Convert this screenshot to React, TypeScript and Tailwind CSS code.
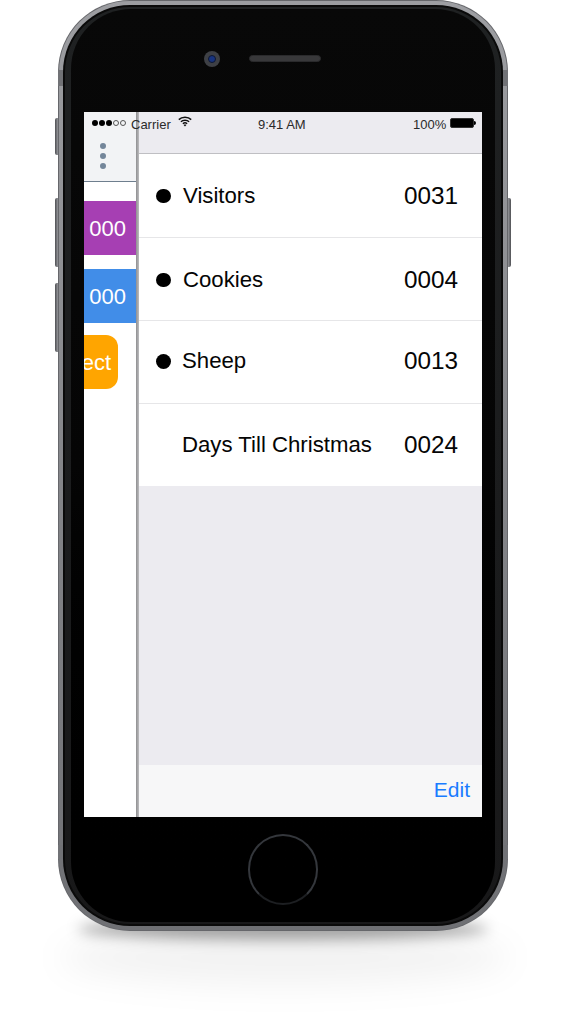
import React from "react";

function Row({ label, value, dot, h, pad, dotMl, labelMl, border }: { label: string; value: string; dot: boolean; h: string; pad: string; dotMl: string; labelMl: string; border: boolean }) {
  return (
    <div className={`flex items-center bg-white shrink-0 ${h} ${pad} ${border ? "border-b border-[#e6e6e8]" : ""}`}>
      <div className={`w-[17px] ${dotMl} flex justify-start`}>
        {dot && <div className="w-[14.5px] h-[14.5px] rounded-full bg-black" />}
      </div>
      <span className={`${labelMl} text-[22.2px] leading-none text-[#050505] flex-1`}>{label}</span>
      <span className="text-[24.3px] leading-none text-[#050505] mr-[24px]">{value}</span>
    </div>
  );
}

function SideButton({ h, mt }: { h: string; mt: string }) {
  return <div className={`w-[3px] rounded-l-[2px] bg-gradient-to-r from-[#4e4f53] to-[#97989c] ${h} ${mt}`} />;
}

function Band({ pos }: { pos: string }) {
  return <div className={`absolute w-[450px] left-0 ${pos} flex justify-between`}>
    <div className="w-[5px] h-full bg-[#717276]" />
    <div className="w-[5px] h-full bg-[#717276]" />
  </div>;
}

export default function App() {
  return (
    <div className="w-[585px] h-[1024px] bg-white overflow-hidden relative" style={{ fontFamily: '"Liberation Sans", Arial, sans-serif' }}>
      {/* ground shadow */}
      <div className="absolute left-[78px] top-[918px] w-[410px] h-[22px] rounded-[50%] bg-[#00000059] blur-[7px]" />
      <div className="absolute left-[60px] top-[930px] w-[450px] h-[55px] rounded-[50%] bg-[#0000000d] blur-[16px]" />

      {/* side buttons */}
      <div className="absolute left-[55px] top-[118px] flex flex-col">
        <SideButton h="h-[37px]" mt="mt-0" />
        <SideButton h="h-[69px]" mt="mt-[43px]" />
        <SideButton h="h-[69px]" mt="mt-[16px]" />
      </div>
      <div className="absolute left-[508px] top-[198px] w-[3px] h-[69px] rounded-r-[2px] bg-gradient-to-l from-[#4e4f53] to-[#97989c]" />

      {/* phone body */}
      <div className="absolute left-[58px] top-0 w-[450px] h-[931px] rounded-[72px] p-[1px] bg-[#66676b]">
        <div className="w-full h-full rounded-[71px] p-[4px] bg-gradient-to-b from-[#9d9ea2] via-[#85868a] to-[#6f7074]">
          <div className="w-full h-full rounded-[67px] p-[2px] bg-[#0a0a0a]">
            <div className="w-full h-full rounded-[65px] px-[6px] py-[2px] bg-gradient-to-b from-[#1f2122] to-[#181819]">
              <div className="w-full h-full rounded-[60px] bg-gradient-to-b from-[#080808] via-[#050505] to-black flex flex-col items-center">
                {/* camera + speaker */}
                <div className="flex items-center h-[103px] pb-[4px] shrink-0 mr-[42px]">
                  <div className="w-[16px] h-[16px] rounded-full bg-[#3e4045] flex items-center justify-center">
                    <div className="w-[8px] h-[8px] rounded-full bg-[#17337f] border border-[#10182f]" />
                  </div>
                  <div className="ml-[29px] w-[72px] h-[7px] rounded-full bg-[#38383a] border border-[#2a2a2c]" />
                </div>

                {/* screen */}
                <div className="w-[398px] h-[705px] shrink-0 bg-white relative flex overflow-hidden">
                  {/* left drawer */}
                  <div className="w-[52px] shrink-0 flex flex-col">
                    <div className="h-[70px] bg-[#f2f3f5] border-b border-[#6e7e8e] flex flex-col items-center gap-[4.3px] pt-[30.5px] pr-[14px] shrink-0">
                      <div className="w-[6px] h-[6px] rounded-full bg-[#74869a]" />
                      <div className="w-[6px] h-[6px] rounded-full bg-[#74869a]" />
                      <div className="w-[6px] h-[6px] rounded-full bg-[#74869a]" />
                    </div>
                    <div className="mt-[19px] h-[54px] bg-[#a63fb3] text-white text-[22px] flex items-center justify-end pr-[10px]">000</div>
                    <div className="mt-[14px] h-[54px] bg-[#418de8] text-white text-[22px] flex items-center justify-end pr-[10px]">000</div>
                    <div className="mt-[12px] h-[54px] w-[34px] bg-[#ffa500] text-white text-[22px] rounded-r-[12px] flex items-center justify-end pr-[7px] overflow-hidden">
                      <span className="whitespace-nowrap">ect</span>
                    </div>
                  </div>

                  {/* divider */}
                  <div className="w-[3px] shrink-0 bg-gradient-to-r from-[#8f8f91] to-[#bdbdbf]" />

                  {/* right panel */}
                  <div className="flex-1 flex flex-col bg-[#ecebf0]">
                    <div className="h-[42px] shrink-0 bg-[#ecebf0] border-b border-[#bfbfc3]" />
                    <Row label="Visitors" value="0031" dot h="h-[84px]" pad="pt-[1px]" dotMl="ml-[17px]" labelMl="ml-[10px]" border />
                    <Row label="Cookies" value="0004" dot h="h-[83px]" pad="pt-[2px]" dotMl="ml-[17px]" labelMl="ml-[10px]" border />
                    <Row label="Sheep" value="0013" dot h="h-[83px]" pad="pb-[1px]" dotMl="ml-[17px]" labelMl="ml-[9px]" border />
                    <Row label="Days Till Christmas" value="0024" dot={false} h="h-[82px]" pad="pt-[0px]" dotMl="ml-[17px]" labelMl="ml-[9px]" border={false} />
                    <div className="flex-1" />
                    <div className="h-[52px] shrink-0 bg-[#f7f7f8] flex items-center justify-end pr-[12px] pb-[2px] text-[21px] text-[#1a7cff]">Edit</div>
                  </div>

                  {/* status bar */}
                  <div className="absolute left-0 top-0 w-full h-[24px] text-[13px] text-[#2a2a2a] leading-none">
                    <div className="absolute left-[8px] top-[8px] flex items-center gap-[1px]">
                      {[0, 1, 2].map((i) => <div key={i} className="w-[6px] h-[6px] rounded-full bg-black" />)}
                      {[0, 1].map((i) => <div key={i} className="w-[6px] h-[6px] rounded-full border border-[#555]" />)}
                    </div>
                    <span className="absolute left-[47px] top-[6px]">Carrier</span>
                    <svg className="absolute left-[94px] top-[4px]" width="14" height="11" viewBox="0 0 14 11" fill="none" stroke="#111" strokeWidth="1.5">
                      <path d="M0.8 3.6 C4 0.4 10 0.4 13.2 3.6" />
                      <path d="M2.9 5.7 C5 3.7 9 3.7 11.1 5.7" />
                      <path d="M4.9 7.7 C6 6.7 8 6.7 9.1 7.7" />
                      <path d="M7 10.6 L5.6 9 C6.3 8.4 7.7 8.4 8.4 9 Z" fill="#111" stroke="none" />
                    </svg>
                    <span className="absolute left-[174px] top-[6px]">9:41 AM</span>
                    <span className="absolute left-[329px] top-[6px]">100%</span>
                    <div className="absolute left-[366px] top-[6px] w-[24px] h-[10px] border border-[#333] rounded-[2px] bg-black" />
                    <div className="absolute left-[390px] top-[9px] w-[2px] h-[4px] rounded-r-full bg-black" />
                  </div>
                </div>

                {/* home button */}
                <div className="mt-[17px] w-[70px] h-[71px] rounded-full border-[2px] border-[#34373c] border-b-[#1d1f22] shrink-0" />
              </div>
            </div>
          </div>
        </div>
        <Band pos="top-[70px] h-[16px]" />
        <Band pos="top-[845px] h-[14px]" />
      </div>
    </div>
  );
}
